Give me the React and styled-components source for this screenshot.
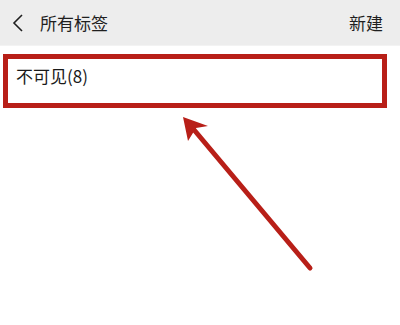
import React from 'react'
import styled, { createGlobalStyle } from 'styled-components'

const Global = createGlobalStyle`
  html, body {
    margin: 0;
    padding: 0;
    background: #ffffff;
    font-family: "Noto Sans CJK SC", "Noto Sans", sans-serif;
  }
`

const Page = styled.div`
  position: relative;
  width: 400px;
  height: 325px;
  overflow: hidden;
  background: #ffffff;
`

const Header = styled.div`
  height: 45px;
  background: #ededed;
  display: flex;
  align-items: center;
  padding: 0 17px 0 12px;
  color: #1f1f1f;
  font-size: 17px;
`

const Back = styled.div`
  width: 14px;
  height: 20px;
  display: flex;
  align-items: center;
  margin-right: 14px;
`

const Title = styled.div`
  flex: 1;
`

const Action = styled.div`
  font-size: 17px;
`

const List = styled.div`
  border-top: 1px solid #f3f3f3;
`

const Item = styled.div`
  margin: 8px 13px 0 3px;
  height: 39px;
  padding: 5px 0 0 8px;
  line-height: 24px;
  font-size: 17px;
  color: #1a1a1a;
  border: ${p => (p.highlight ? '5px solid #b81f18' : '0')};
`

const Arrow = styled.svg`
  position: absolute;
  left: 0;
  top: 0;
  pointer-events: none;
`

const App = () => {
  return (
    <Page>
      <Global />
      <Header>
        <Back>
          <svg width="12" height="20" viewBox="0 0 12 20">
            <path d="M10 2 L2 10 L10 18" fill="none" stroke="#1f1f1f" strokeWidth="1.6" />
          </svg>
        </Back>
        <Title>所有标签</Title>
        <Action>新建</Action>
      </Header>
      <List>
        <Item highlight>不可见(8)</Item>
      </List>
      <Arrow width="400" height="325" viewBox="0 0 400 325">
        <line x1="310" y1="268" x2="190" y2="125" stroke="#b81f18" strokeWidth="5" strokeLinecap="round" />
        <polygon points="183,117 208,126 196,128 188,141" fill="#b81f18" />
      </Arrow>
    </Page>
  )
}

export default App
